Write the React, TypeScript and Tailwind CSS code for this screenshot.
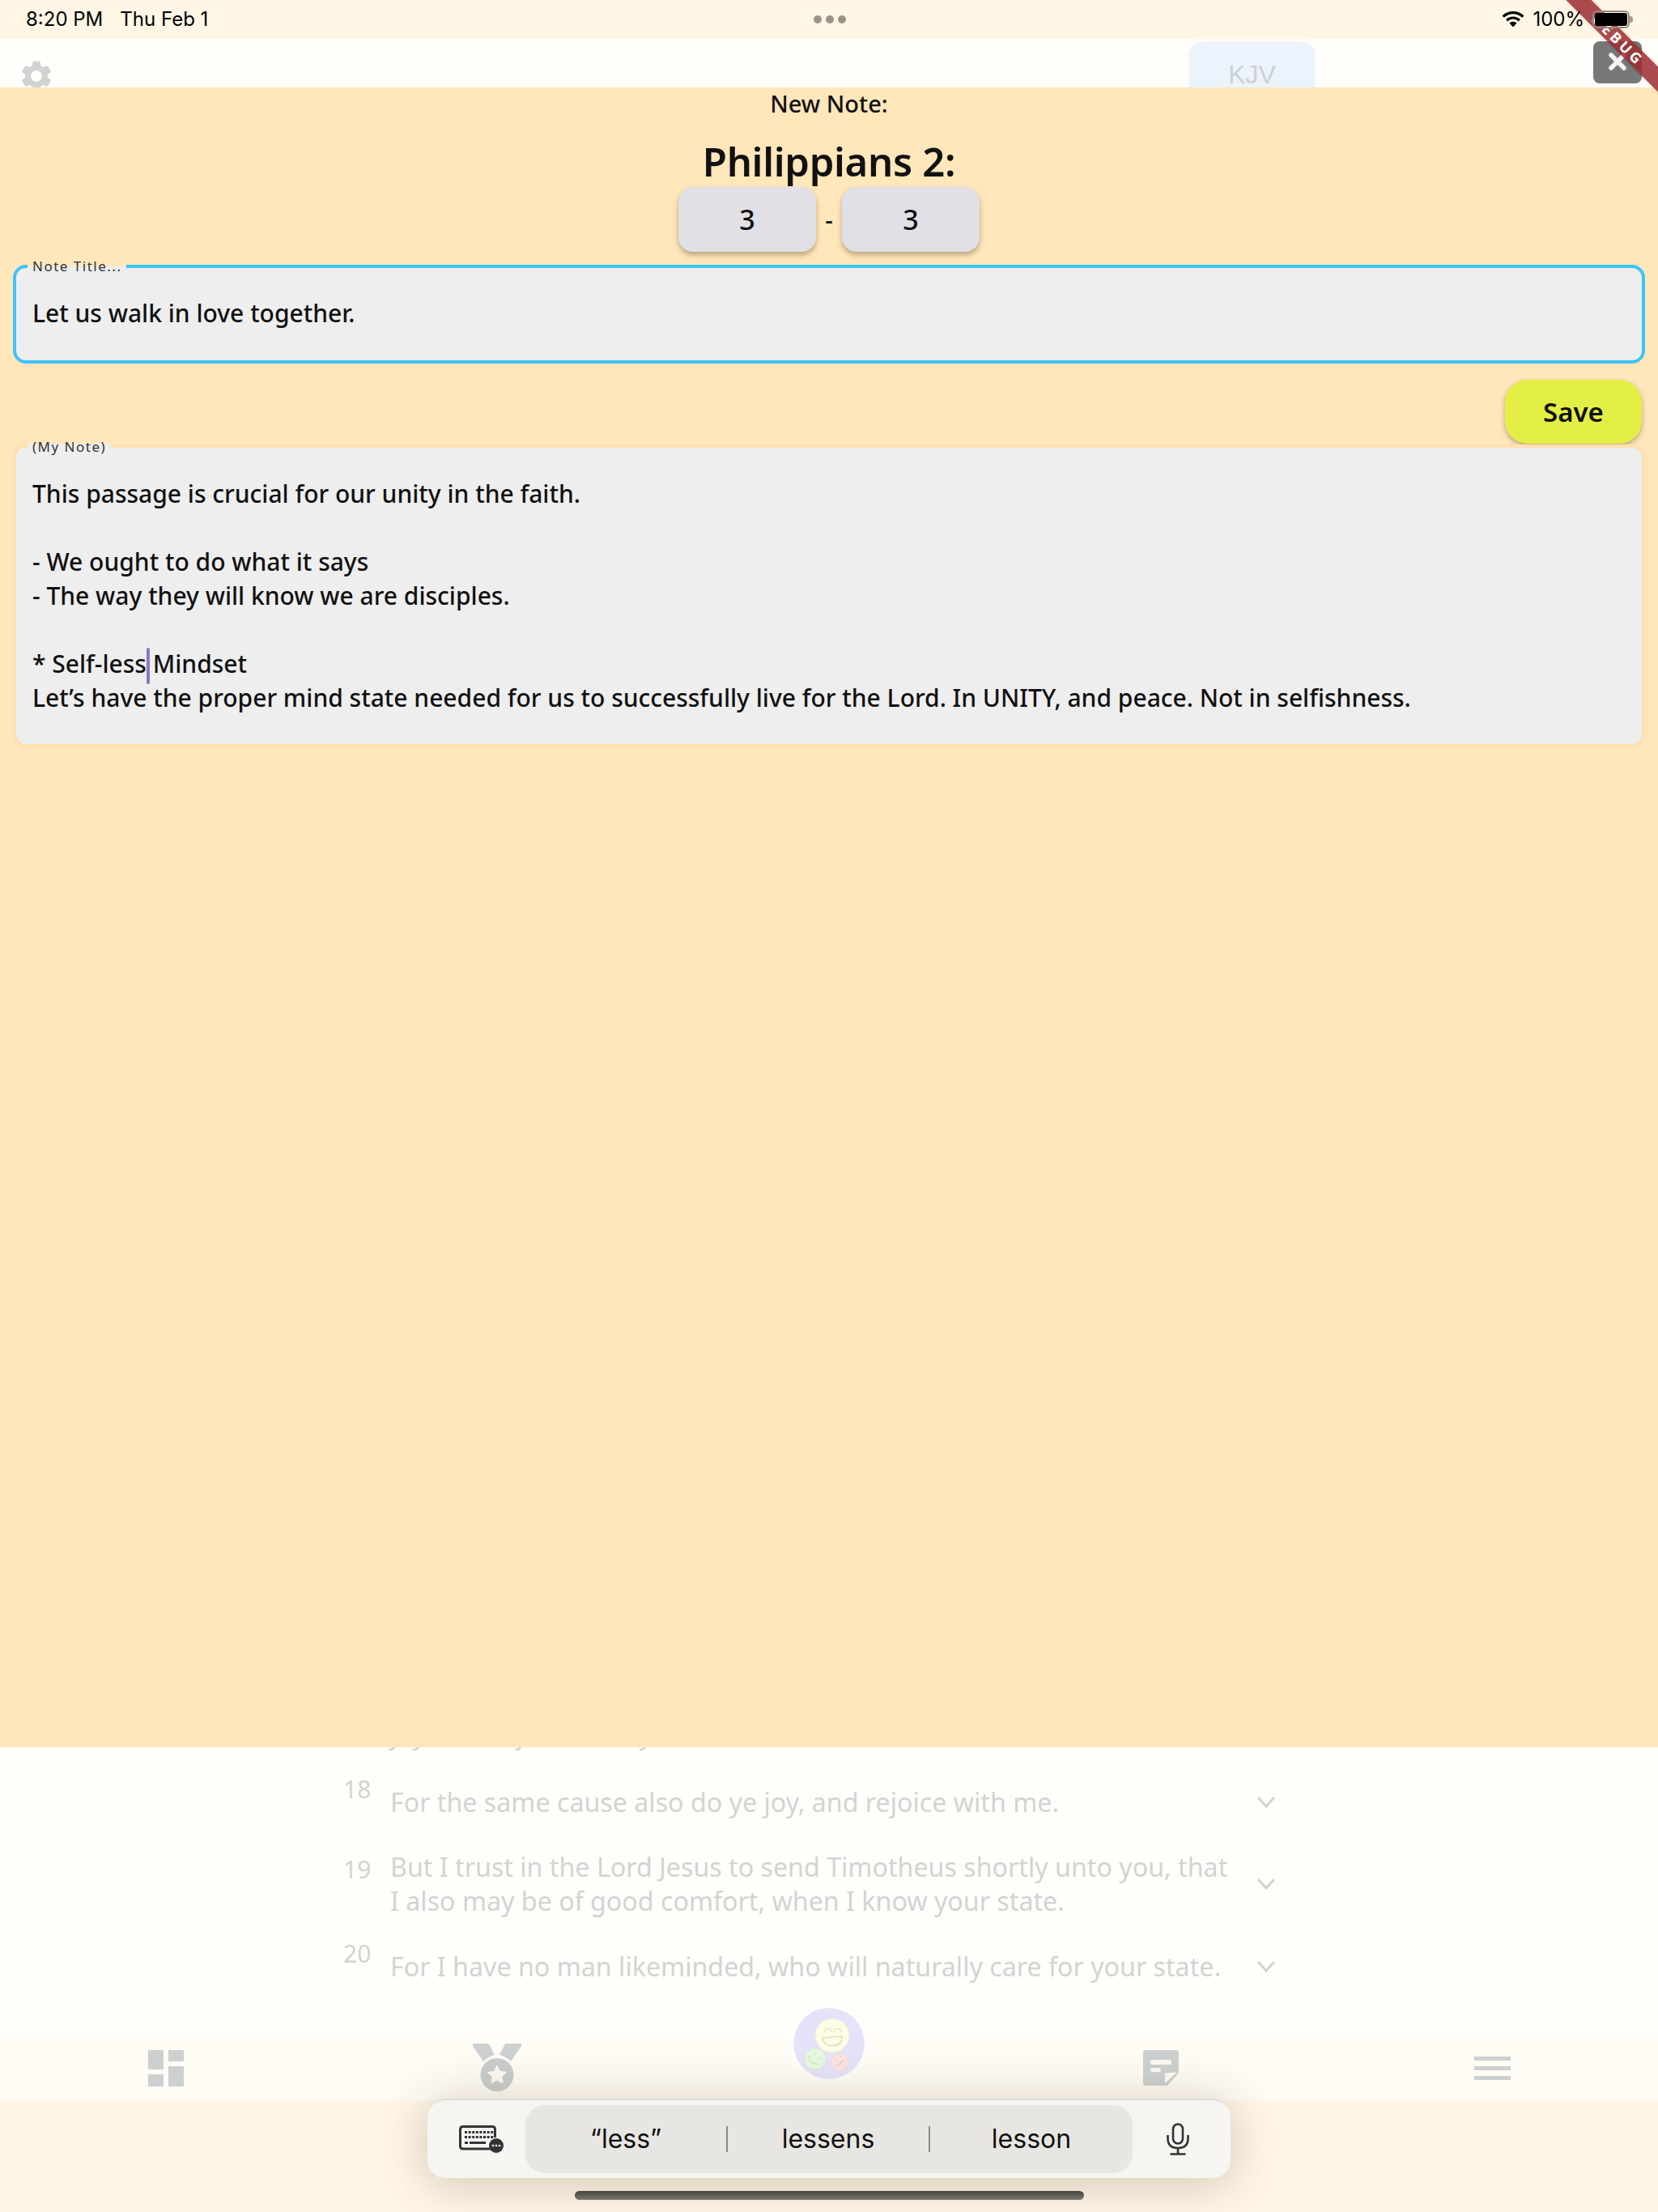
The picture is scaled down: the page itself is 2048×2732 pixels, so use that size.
import React from "react";
import { MdSettings } from "react-icons/md";

const ui = "[font-family:'Noto_Sans',sans-serif]";
const sys = "[font-family:Inter,sans-serif]";

function Chevron() {
  return (
    <svg width="24" height="16" viewBox="0 0 24 16" fill="none" className="shrink-0">
      <path d="M2 2 L12 13 L22 2" stroke="#d3d3d3" strokeWidth="3" />
    </svg>
  );
}

function Verse({ n, lines, top, lift }: { n?: string; lines: string[]; top: string; lift: string }) {
  return (
    <div className={`flex items-center ${top}`}>
      <div className={`w-[58px] text-[30px] leading-[36px] text-[#d3d3d3] ${lift}`}>{n}</div>
      <div className="w-[1070px] text-[32.200px] leading-[42px] text-[#d3d3d3]">
        {lines.map((l) => (
          <div key={l} className="whitespace-nowrap">{l}</div>
        ))}
      </div>
      {n && <Chevron />}
    </div>
  );
}

function Wifi() {
  return (
    <svg width="28" height="20" viewBox="0 0 28 20" fill="#000">
      <path d="M14 0C8.8 0 4 2 .6 5.4l2.2 2.4C5.700 4.900 9.700 3.200 14 3.200s8.300 1.700 11.200 4.600l2.200-2.400C24 2 19.200 0 14 0z" />
      <path d="M14 6.400c-3.400 0-6.600 1.300-8.900 3.600l2.200 2.400c1.800-1.700 4.100-2.800 6.700-2.800s4.900 1.100 6.700 2.800l2.200-2.400c-2.300-2.300-5.500-3.600-8.900-3.600z" />
      <path d="M14 12.800c-1.800 0-3.300.7-4.500 1.800L14 19.600l4.500-5c-1.200-1.100-2.700-1.800-4.500-1.800z" />
    </svg>
  );
}

function DashboardIcon() {
  return (
    <svg width="44" height="45" viewBox="0 0 44 45" fill="#cdd0d0">
      <rect x="0" y="0" width="19" height="24" />
      <rect x="0" y="30" width="19" height="15" />
      <rect x="25" y="0" width="19" height="14" />
      <rect x="25" y="20" width="19" height="25" />
    </svg>
  );
}

function MedalIcon() {
  return (
    <svg width="62" height="60" viewBox="0 0 62 60">
      <path d="M3 1H19Q21 1 22 3L28 15Q20 17 14 23L1 4Q0 1 3 1Z" fill="#cdd0d0" />
      <path d="M59 1H43Q41 1 40 3L34 15Q42 17 48 23L61 4Q62 1 59 1Z" fill="#cdd0d0" />
      <circle cx="31" cy="39.500" r="20.500" fill="#c9cccc" />
      <path d="M31 28.500L34.500 35.500L42 36.500L36.500 41.800L38 49.300L31 45.700L24 49.300L25.500 41.800L20 36.500L27.500 35.500Z" fill="#fdf9f2" stroke="#fdf9f2" strokeWidth="1.500" strokeLinejoin="round" />
    </svg>
  );
}

function FacesIcon() {
  return (
    <svg width="88" height="88" viewBox="0 0 88 88" className="rounded-full shadow-[0_0_8px_6px_rgba(255,255,255,0.6)]">
      <circle cx="44" cy="44" r="44" fill="#e5e3fa" />
      <circle cx="48" cy="34" r="21" fill="#fdfde6" stroke="#ecebd2" strokeWidth="1" />
      <path d="M38 30a4.500 4.500 0 0 1 9 0M50 30a4.500 4.500 0 0 1 9 0" fill="none" stroke="#dcdcc0" strokeWidth="1.200" />
      <path d="M36 37L60 35Q60 47 48 46.500Q37 46 36 37Z" fill="none" stroke="#dcdcc0" strokeWidth="1.500" />
      <circle cx="27" cy="63" r="13" fill="#e7f8dd" stroke="#dbeccf" strokeWidth="1" />
      <path d="M20 58Q18 70 31 69" fill="none" stroke="#cfe4c0" strokeWidth="1.200" />
      <circle cx="27" cy="57" r="1" fill="#cfe4c0" />
      <circle cx="33" cy="62" r="1" fill="#cfe4c0" />
      <circle cx="57" cy="67" r="11" fill="#fbe3e3" stroke="#f0d4d4" strokeWidth="1" />
      <path d="M52 73L63 64" stroke="#e8c6c6" strokeWidth="1.200" />
      <circle cx="53" cy="65" r="1" fill="#e8c6c6" />
      <circle cx="58" cy="60" r="1" fill="#e8c6c6" />
    </svg>
  );
}

function NoteIcon() {
  return (
    <svg width="44" height="44" viewBox="0 0 44 44">
      <path d="M3 0H41Q44 0 44 3V28L30 44H3Q0 44 0 41V3Q0 0 3 0Z" fill="#cdd0d0" />
      <rect x="9" y="12" width="26" height="6" rx="3" fill="#fdf9f2" />
      <rect x="9" y="22" width="13" height="5" rx="2.500" fill="#fdf9f2" />
      <path d="M27 41V28.500L42 27.500Z" fill="#fdf9f2" />
    </svg>
  );
}

function MenuIcon() {
  return (
    <div className="flex flex-col gap-[7px]">
      <div className="w-[45px] h-[5px] bg-[#cdd0d0]" />
      <div className="w-[45px] h-[5px] bg-[#cdd0d0]" />
      <div className="w-[45px] h-[5px] bg-[#cdd0d0]" />
    </div>
  );
}

function KeyboardIcon() {
  const dots: React.ReactNode[] = [];
  for (let r = 0; r < 2; r++) {
    for (let c = 0; c < 8; c++) {
      dots.push(<rect key={`${r}-${c}`} x={7 + c * 4.6} y={7 + r * 6} width="3" height="3" fill="#333" />);
    }
  }
  return (
    <svg width="56" height="34" viewBox="0 0 56 34" fill="none">
      <path d="M42 29H5Q1.500 29 1.500 25.500V5Q1.500 1.500 5 1.500H41Q44.500 1.500 44.500 5V15" stroke="#333" strokeWidth="3" />
      {dots}
      <rect x="7" y="20" width="4" height="3" fill="#333" />
      <rect x="13" y="20" width="20" height="3" fill="#333" />
      <circle cx="46" cy="25" r="9" fill="#333" />
      <circle cx="42" cy="25" r="1.300" fill="#fff" />
      <circle cx="46" cy="25" r="1.300" fill="#fff" />
      <circle cx="50" cy="25" r="1.300" fill="#fff" />
    </svg>
  );
}

function MicIcon() {
  return (
    <svg width="28" height="40" viewBox="0 0 28 40" fill="none" stroke="#333" strokeWidth="2.600">
      <rect x="8" y="1.500" width="12" height="24" rx="6" />
      <path d="M1.500 15V19Q1.500 31 14 31Q26.500 31 26.500 19V15" />
      <path d="M14 31V38.500M4.500 38.500H23.500" />
    </svg>
  );
}

export default function App() {
  return (
    <div className={`relative w-[2048px] h-[2732px] overflow-hidden flex flex-col bg-[#fffefa] ${ui}`}>
      {/* status bar */}
      <div className={`h-[48px] shrink-0 bg-[#fff6e6] flex items-center justify-between pl-[32px] pr-[31px] text-[24px] text-black ${sys}`}>
        <div className="flex gap-[21px] w-[400px]">
          <span>8:20 PM</span>
          <span>Thu Feb 1</span>
        </div>
        <div className="flex gap-[5px]">
          <div className="w-[10px] h-[10px] rounded-full bg-[#9a9488]" />
          <div className="w-[10px] h-[10px] rounded-full bg-[#9a9488]" />
          <div className="w-[10px] h-[10px] rounded-full bg-[#9a9488]" />
        </div>
        <div className="flex items-center justify-end gap-[10px] w-[400px] relative z-30">
          <Wifi />
          <span>100%</span>
          <div className="flex items-center">
            <div className="w-[46px] h-[22px] rounded-[6px] border-[2px] border-[#918a7d] p-[1px]">
              <div className="w-full h-full rounded-[3px] bg-black" />
            </div>
            <div className="w-[4px] h-[8px] rounded-r-[3px] bg-[#a79f90]" />
          </div>
        </div>
      </div>

      {/* header, mostly hidden by the sheet */}
      <div className="h-[60px] shrink-0 flex items-start justify-between pl-[22px] pr-[20px]">
        <MdSettings size={46} color="#d1d3d3" className="mt-[23px]" />
        <div className="flex items-start gap-[344px]">
          <div className="w-[155px] h-[90px] mt-[4px] rounded-[16px] bg-[#ebf3fc] shadow-[0_0_6px_rgba(0,0,0,0.05)] text-center text-[32px] leading-[48px] pt-[16px] text-[#d0d0d0] [font-family:'Liberation_Sans',sans-serif]">
            KJV
          </div>
          <div className="w-[60px] h-[52px] mt-[3px] rounded-[8px] bg-[#787878] flex items-center justify-center">
            <svg width="24" height="24" viewBox="0 0 24 24" className="-mt-[2px]">
              <path d="M4 4L20 20M20 4L4 20" stroke="#f4f4f4" strokeWidth="5.500" strokeLinecap="round" />
            </svg>
          </div>
        </div>
      </div>

      {/* note sheet */}
      <div className="relative z-10 h-[2050px] shrink-0 bg-[#ffe6bb] text-[#111] flex flex-col items-center font-medium">
        <div className="text-[29px] leading-[40px]">New Note:</div>
        <div className="text-[49px] leading-[62px] mt-[20px] font-semibold tracking-[-0.3px]">Philippians 2:</div>
        <div className="flex items-center gap-[10px] h-[80px] mt-[1px]">
          <div className="w-[170px] h-[80px] rounded-[18px] bg-[#e1e0e6] shadow-[0_4px_6px_rgba(90,70,40,0.4)] flex items-center justify-center text-[34px]">3</div>
          <span className="text-[30px] w-[12px] text-center">-</span>
          <div className="w-[170px] h-[80px] rounded-[18px] bg-[#e1e0e6] shadow-[0_4px_6px_rgba(90,70,40,0.4)] flex items-center justify-center text-[34px]">3</div>
        </div>

        {/* title field */}
        <div className="relative w-[2016px] h-[122px] mt-[16px] rounded-[16px] border-[4px] border-[#3cc4fb] bg-[#eeeeee] flex items-center pl-[20px] pb-[3px] text-[30px]">
          <span className="absolute -top-[12px] left-[14px] px-[6px] text-[17px] leading-[20px] font-normal tracking-[1.500px] text-[#333] [background:linear-gradient(#ffe6bb_50%,#eeeeee_50%)]">Note Title...</span>
          Let us walk in love together.
        </div>

        <div className="w-[2048px] flex justify-end pr-[20px] mt-[20px]">
          <div className="w-[169px] h-[79px] rounded-[28px] bg-[#e4ef46] shadow-[0_3px_6px_rgba(90,70,40,0.4)] flex items-center justify-center text-[33px] font-semibold">Save</div>
        </div>

        {/* note field */}
        <div className="relative w-[2016px] h-[374px] mt-[1px] rounded-[16px] border-[4px] border-[#ffe0ae] bg-[#eeeeee] pl-[20px] pt-[36px] text-[30px] leading-[42px]">
          <span className="absolute -top-[11px] left-[14px] px-[6px] text-[17px] leading-[20px] font-normal tracking-[1.500px] text-[#333] [background:linear-gradient(#ffe6bb_30%,#eeeeee_30%)]">(My Note)</span>
          <div>This passage is crucial for our unity in the faith.</div>
          <div className="h-[42px]" />
          <div>- We ought to do what it says</div>
          <div>- The way they will know we are disciples.</div>
          <div className="h-[42px]" />
          <div>
            * Self-less
            <span className="inline-block relative w-0 h-0">
              <span className="absolute left-0 -top-[31px] w-[4px] h-[45px] rounded-full bg-[#8a78c4]" />
            </span>{" "}
            Mindset
          </div>
          <div className="whitespace-nowrap">Let’s have the proper mind state needed for us to successfully live for the Lord. In UNITY, and peace. Not in selfishness.</div>
        </div>
      </div>

      {/* verses dimmed behind the sheet */}
      <div className="shrink-0 h-[393px] -mt-[37px] pl-[424px]">
        <Verse lines={["joy, and rejoice with you all."]} top="" lift="" />
        <Verse n="18" lines={["For the same cause also do ye joy, and rejoice with me."]} top="mt-[42px]" lift="-mt-[32px]" />
        <Verse n="19" lines={["But I trust in the Lord Jesus to send Timotheus shortly unto you, that", "I also may be of good comfort, when I know your state."]} top="mt-[38px]" lift="-mt-[36px]" />
        <Verse n="20" lines={["For I have no man likeminded, who will naturally care for your state."]} top="mt-[39px]" lift="-mt-[32px]" />
      </div>

      {/* bottom nav */}
      <div className="h-[80px] shrink-0 bg-[#fffbf5] grid grid-cols-5 items-center justify-items-center">
        <DashboardIcon />
        <div className="-mt-[3px]"><MedalIcon /></div>
        <div className="-mt-[60px] relative"><FacesIcon /></div>
        <NoteIcon />
        <MenuIcon />
      </div>
      <div className="flex-1 bg-[#fff6e8]" />

      {/* keyboard shortcut bar */}
      <div className="absolute left-[528px] top-[2592px] z-20 w-[992px] h-[98px] rounded-[22px] bg-[#f7f5f2] border-t-[2px] border-[#dedbd6] shadow-[0_6px_60px_rgba(100,80,40,0.3)] flex items-center">
        <div className="w-[121px] flex justify-center pl-[12px]"><KeyboardIcon /></div>
        <div className={`w-[750px] h-[84px] rounded-[24px] bg-[#e8e6e3] grid grid-cols-3 items-center text-[32px] text-[#111] ${sys} font-normal`}>
          <div className="text-center border-r-[2px] border-[#8c8a87] h-[32px] leading-[32px]">“less”</div>
          <div className="text-center border-r-[2px] border-[#8c8a87] h-[32px] leading-[32px]">lessens</div>
          <div className="text-center h-[32px] leading-[32px]">lesson</div>
        </div>
        <div className="w-[121px] flex justify-center pr-[9px]"><MicIcon /></div>
      </div>

      {/* home indicator */}
      <div className="absolute left-[710px] top-[2706px] z-20 w-[629px] h-[11px] rounded-full bg-gradient-to-b from-[#45443f] to-[#7a776e]" />

      {/* debug ribbon */}
      <div className="absolute -right-[101px] top-[38px] z-20 w-[300px] h-[22px] rotate-45 bg-[#9c2b30]/85 text-white text-center text-[18px] leading-[22px] font-bold tracking-[4px] shadow-[0_0_4px_rgba(0,0,0,0.2)]">
        DEBUG
      </div>
    </div>
  );
}
